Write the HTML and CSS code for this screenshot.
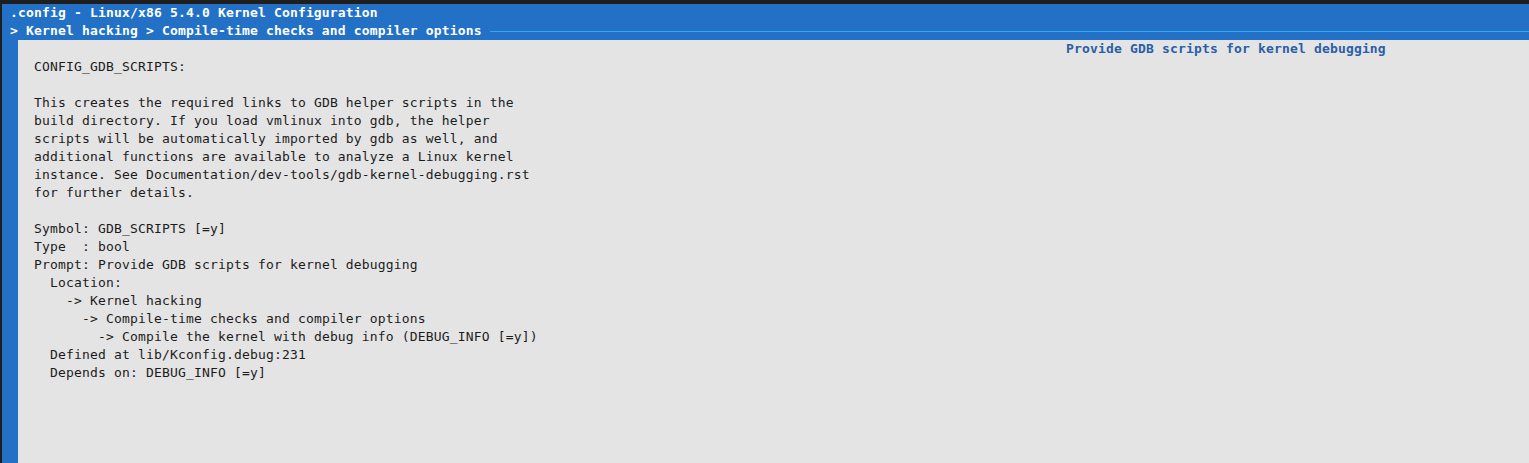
FILE: index.html
```html
<!DOCTYPE html>
<html lang="en">
<head>
    <meta charset="UTF-8">
    <title>.config - Linux/x86 5.4.0 Kernel Configuration</title>
    <link rel="stylesheet" href="styles.css">
</head>
<body>
    <div class="terminal">
        <div class="title-row">.config - Linux/x86 5.4.0 Kernel Configuration</div>
        <div class="crumb-row">
            <span class="crumb-text">&gt; Kernel hacking &gt; Compile-time checks and compiler options</span>
            <span class="crumb-line"></span>
        </div>
        <section class="help-panel">
            <div class="help-title">Provide GDB scripts for kernel debugging</div>
<pre class="help-text">CONFIG_GDB_SCRIPTS:

This creates the required links to GDB helper scripts in the
build directory. If you load vmlinux into gdb, the helper
scripts will be automatically imported by gdb as well, and
additional functions are available to analyze a Linux kernel
instance. See Documentation/dev-tools/gdb-kernel-debugging.rst
for further details.

Symbol: GDB_SCRIPTS [=y]
Type  : bool
Prompt: Provide GDB scripts for kernel debugging
  Location:
    -&gt; Kernel hacking
      -&gt; Compile-time checks and compiler options
        -&gt; Compile the kernel with debug info (DEBUG_INFO [=y])
  Defined at lib/Kconfig.debug:231
  Depends on: DEBUG_INFO [=y]</pre>
        </section>
    </div>
</body>
</html>
```

FILE: styles.css
```css
html, body {
    height: 100%;
}

body {
    margin: 0;
    padding: 4px 0 0 2px;
    box-sizing: border-box;
    background-color: #1e1e1e;
    overflow: hidden;
}

.terminal {
    height: 100%;
    display: flex;
    flex-direction: column;
    background-color: #2271c6;
    font-family: "DejaVu Sans Mono", monospace;
    font-size: 13px;
    letter-spacing: 0.17px;
    line-height: 18px;
}

.title-row {
    padding-left: 8px;
    color: #ffffff;
    font-weight: bold;
    white-space: pre;
}

.crumb-row {
    display: flex;
    align-items: center;
    padding-left: 8px;
    color: #ffffff;
    font-weight: bold;
    white-space: pre;
}

.crumb-line {
    flex: 1;
    margin-left: 8px;
    margin-top: 1px;
    border-top: 1px solid #35a7ef;
}

.help-panel {
    flex: 1;
    margin-left: 16px;
    background-color: #e4e4e4;
}

.help-title {
    padding-left: 1048px;
    color: #2a5ea8;
    font-weight: bold;
    white-space: pre;
}

.help-text {
    margin: 0;
    padding-left: 16px;
    color: #1c1c1c;
    font: inherit;
    letter-spacing: inherit;
}
```
